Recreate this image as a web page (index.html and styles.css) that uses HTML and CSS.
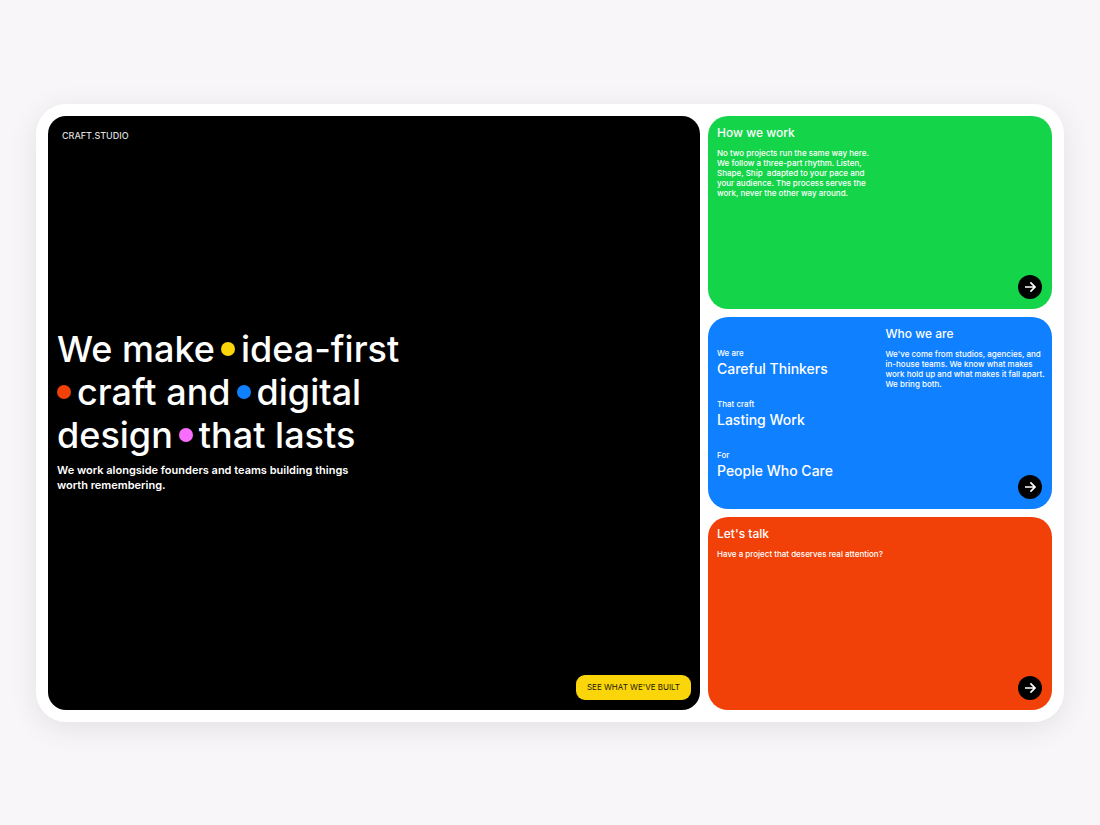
FILE: index.html
```html
<!DOCTYPE html>
<html lang="en">
<head>
    <meta charset="UTF-8">
    <title>Craft.Studio</title>
    <meta name="viewport" content="width=device-width, initial-scale=1.0">
    <link rel="stylesheet" href="styles.css">
</head>
<body>
    <main class="frame">
        <section class="hero">
            <a href="#" class="logo">CRAFT.STUDIO</a>
            <div class="intro">
                <h1>
                    We make<span class="dot yellow"></span>idea-first<br>
                    <span class="dot red"></span>craft and<span class="dot blue"></span>digital<br>
                    design<span class="dot pink"></span>that lasts
                </h1>
                <p>We work alongside founders and teams building things worth remembering.</p>
            </div>
            <button type="button" class="cta">SEE WHAT WE'VE BUILT</button>
        </section>

        <div class="cards">
            <section class="card green">
                <div class="text">
                    <h2>How we work</h2>
                    <p>No two projects run the same way here. We follow a three-part rhythm. Listen, Shape, Ship &nbsp;adapted to your pace and your audience. The process serves the work, never the other way around.</p>
                </div>
                <a href="#" class="arrow" aria-label="How we work">
                    <svg viewBox="0 0 24 24"><path d="M7 12h10M12.4 7.4L17 12l-4.6 4.6"/></svg>
                </a>
            </section>

            <section class="card blue">
                <dl class="values">
                    <div>
                        <dt>We are</dt>
                        <dd>Careful Thinkers</dd>
                    </div>
                    <div>
                        <dt>That craft</dt>
                        <dd>Lasting Work</dd>
                    </div>
                    <div>
                        <dt>For</dt>
                        <dd>People Who Care</dd>
                    </div>
                </dl>
                <div class="side">
                    <div class="text lines">
                        <h2>Who we are</h2>
                        <p>We've come from studios, agencies, and<br>in-house teams. We know what makes<br>work hold up and what makes it fall apart.<br>We bring both.</p>
                    </div>
                    <a href="#" class="arrow" aria-label="Who we are">
                        <svg viewBox="0 0 24 24"><path d="M7 12h10M12.4 7.4L17 12l-4.6 4.6"/></svg>
                    </a>
                </div>
            </section>

            <section class="card red">
                <div class="text lines">
                    <h2>Let's talk</h2>
                    <p>Have a project that deserves real attention?</p>
                </div>
                <a href="#" class="arrow" aria-label="Let's talk">
                    <svg viewBox="0 0 24 24"><path d="M7 12h10M12.4 7.4L17 12l-4.6 4.6"/></svg>
                </a>
            </section>
        </div>
    </main>
</body>
</html>
```

FILE: styles.css
```css
* {
    box-sizing: border-box;
}
body {
    display: flex;
    align-items: center;
    min-height: 100vh;
    margin: 0;
    padding: 37px 36px 36px;
    font-family: Inter, "Liberation Sans", sans-serif;
    font-weight: 500;
    color: #fff;
    background: #f8f6f9;
}
h1, h2, p, dl, dd {
    margin: 0;
    font-weight: 500;
}
.frame {
    flex: 1;
    display: grid;
    grid-template-columns: 652fr 344fr;
    gap: 8px;
    min-height: calc(75vh - 1px);
    padding: 12px;
    border-radius: 30px;
    background: #fff;
    box-shadow: 0 6px 30px rgba(0, 0, 0, 0.09);
}
.hero {
    display: flex;
    flex-direction: column;
    justify-content: space-between;
    padding: 10px 9px;
    border-radius: 18px;
    background: #000;
}
.logo {
    padding: 4px 5px;
    font-size: 9px;
    line-height: 12px;
    color: #ddd;
    text-decoration: none;
}
.intro h1 {
    font-size: 36px;
    line-height: 43px;
    white-space: nowrap;
}
.intro p {
    max-width: 304px;
    margin-top: 6px;
    font-size: 11px;
    font-weight: 600;
    line-height: 15px;
}
.dot {
    display: inline-block;
    width: 14px;
    height: 14px;
    margin: 0 6px;
    border-radius: 50%;
    vertical-align: 6px;
}
.dot.red {
    margin-left: 0;
}
.cta {
    align-self: flex-end;
    padding: 7px 11px;
    border: 0;
    border-radius: 9px;
    font-family: inherit;
    font-size: 8px;
    line-height: 11px;
    color: #1c1800;
    background: #fad50a;
    cursor: pointer;
}
.cards {
    display: grid;
    grid-template-rows: repeat(3, 1fr);
    gap: 8px;
}
.card {
    display: flex;
    flex-direction: column;
    justify-content: space-between;
    padding: 9px 10px 10px 9px;
    border-radius: 20px;
}
.card.blue {
    display: grid;
    grid-template-columns: repeat(2, minmax(0, 1fr));
    gap: 12px;
}
.side {
    display: flex;
    flex-direction: column;
    justify-content: space-between;
}
.text {
    max-width: 160px;
}
.text.lines {
    white-space: nowrap;
}
.text h2 {
    font-size: 12px;
    line-height: 16px;
}
.text p {
    margin-top: 7px;
    font-size: 8px;
    line-height: 10px;
}
.values {
    display: flex;
    flex-direction: column;
    gap: 20px;
    padding-top: 22px;
}
.values dt {
    font-size: 8px;
    line-height: 11px;
}
.values dd {
    font-size: 14px;
    line-height: 20px;
}
.arrow {
    align-self: flex-end;
    width: 24px;
    height: 24px;
    border-radius: 50%;
    background: #000;
}
.arrow svg {
    display: block;
    fill: none;
    stroke: #fff;
    stroke-width: 1.7;
}
.green {
    background: #14d44a;
}
.blue {
    background: #0f80ff;
}
.red {
    background: #f24108;
}
.yellow {
    background: #fad50a;
}
.pink {
    background: #fa6eff;
}
```
